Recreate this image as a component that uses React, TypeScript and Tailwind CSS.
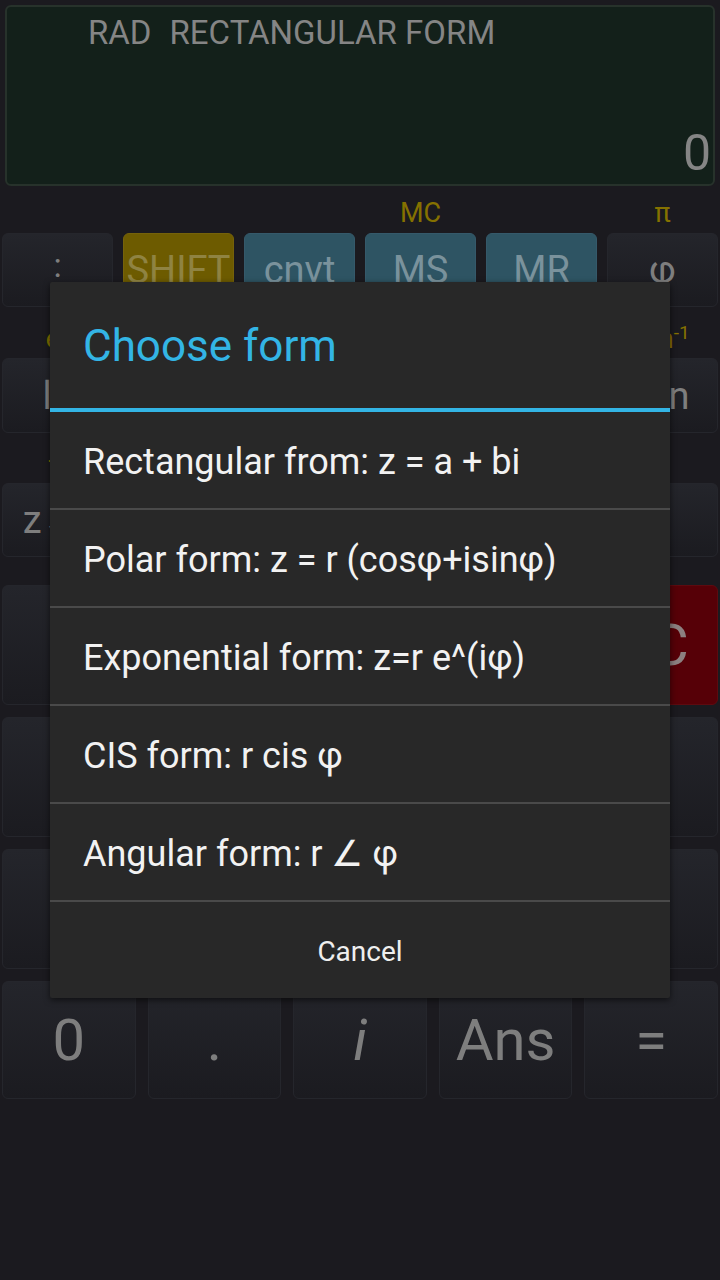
import type { ReactNode } from "react"
import { clsx } from "clsx"

const ROW_TOP = [
  { label: ":", cls: "text-[34px] pb-[10px]" },
  { label: "SHIFT", tone: "shift" },
  { label: "cnvt", tone: "blue" },
  { label: "MS", tone: "blue" },
  { label: "MR", tone: "blue" },
  { label: "φ" },
]

const LABELS_1: ReactNode[] = ["", "", "", "MC", "", "π"]
// keys hidden behind the dialog keep no label
const ROW_2 = ["ln", "", "", "", "", "tan"]
const LABELS_2: ReactNode[] = [
  <span>
    e<sup className="text-[18px]">x</sup>
  </span>,
  "",
  "",
  "",
  "",
  <span>
    tan<sup className="text-[19px]">-1</sup>
  </span>,
]
const ROW_3 = ["z→r", "", "", "", "", ""]
const LABELS_3: ReactNode[] = ["—", "", "", "", "", ""]

const BIG_ROWS = [
  ["", "", "", "", "AC"],
  ["", "", "", "", ""],
  ["", "", "", "", ""],
]

const FORMS = [
  "Rectangular from: z = a + bi",
  "Polar form: z = r (cosφ+isinφ)",
  "Exponential form: z=r e^(iφ)",
  "CIS form: r cis φ",
  "Angular form: r ∠ φ",
]

function Key({ label, tone, className }: { label: string; tone?: string; className?: string }) {
  return (
    <div
      className={clsx(
        "flex items-center justify-center rounded-[6px] border leading-none",
        tone === "shift" && "border-[#75620a] bg-[#6d5b00] text-[#8f8342]",
        tone === "blue" && "border-[#35596a] bg-[#2e5463] text-[#7a929c]",
        tone === "red" && "border-[#5e0a0f] bg-[#560007] text-[#8c8080]",
        !tone && "border-[#25262c] bg-linear-to-b from-[#24252b] to-[#1b1b20] text-[#7e7e7e]",
        className
      )}
    >
      {label}
    </div>
  )
}

function LabelRow({ labels, height, pad }: { labels: ReactNode[]; height: string; pad: string }) {
  return (
    <div className={clsx("grid grid-cols-6 gap-[10px] px-[2px] text-[27px] leading-none text-[#857100]", height, pad)}>
      {labels.map((l, i) => (
        <div key={i} className="text-center">
          {l}
        </div>
      ))}
    </div>
  )
}

export default function App() {
  return (
    <div className="relative h-[1280px] w-[720px] overflow-hidden bg-[#1b1a1f] font-['Roboto','Liberation_Sans',sans-serif]">
      {/* display */}
      <div className="mx-[5px] mt-[5px] flex h-[181px] flex-col justify-between rounded-[6px] border-2 border-[#27322b] bg-[#13201a] pb-[6px] pl-[4px] pr-[2px] pt-[9px]">
        <div className="flex gap-[18px] pl-[77px] text-[33px] leading-none text-[#858585]">
          <span>RAD</span>
          <span>RECTANGULAR FORM</span>
        </div>
        <div className="text-right text-[50px] leading-none text-[#858585]">0</div>
      </div>

      {/* keypad */}
      <LabelRow labels={LABELS_1} height="h-[47px]" pad="pt-[14px]" />
      <div className="grid h-[74px] grid-cols-6 gap-[10px] px-[2px] text-[38px]">
        {ROW_TOP.map((k, i) => (
          <Key key={i} label={k.label} tone={k.tone} className={k.cls} />
        ))}
      </div>
      <LabelRow labels={LABELS_2} height="h-[51px]" pad="pt-[19px]" />
      <div className="grid h-[75px] grid-cols-6 gap-[10px] px-[2px] text-[38px]">
        {ROW_2.map((k, i) => (
          <Key key={i} label={k} />
        ))}
      </div>
      <LabelRow labels={LABELS_3} height="h-[50px]" pad="pt-[16px]" />
      <div className="grid h-[74px] grid-cols-6 gap-[10px] px-[2px] text-[38px]">
        {ROW_3.map((k, i) => (
          <Key key={i} label={k} />
        ))}
      </div>

      <div className="mt-[28px] flex flex-col gap-[12px] px-[2px]">
        {BIG_ROWS.map((row, r) => (
          <div key={r} className="grid h-[120px] grid-cols-5 gap-[12px] text-[58px]">
            {row.map((k, i) => (
              <Key key={i} label={k} tone={k === "AC" ? "red" : undefined} />
            ))}
          </div>
        ))}
        <div className="grid h-[118px] grid-cols-5 gap-[12px] text-[58px]">
          <Key label="0" />
          <Key label="." />
          <Key label="i" className="italic" />
          <Key label="Ans" />
          <Key label="=" />
        </div>
      </div>

      {/* dialog */}
      <div className="absolute left-[50px] top-[282px] w-[620px] rounded-[2px] bg-[#282828] shadow-[0_2px_6px_rgba(0,0,0,0.6)]">
        <div className="flex h-[126px] items-center pl-[33px] pt-[2px] text-[44px] leading-none text-[#33b5e5]">
          Choose form
        </div>
        <div className="h-[4px] bg-[#33b5e5]" />
        {FORMS.map((f) => (
          <div key={f}>
            <div className="flex h-[96px] items-center pl-[33px] pt-[3px] text-[36px] leading-none text-[#f2f2f2]">{f}</div>
            <div className="h-[2px] bg-[#4a4a4a]" />
          </div>
        ))}
        <div className="flex h-[96px] items-center justify-center pt-[4px] text-[28px] leading-none text-[#efefef]">Cancel</div>
      </div>
    </div>
  )
}
